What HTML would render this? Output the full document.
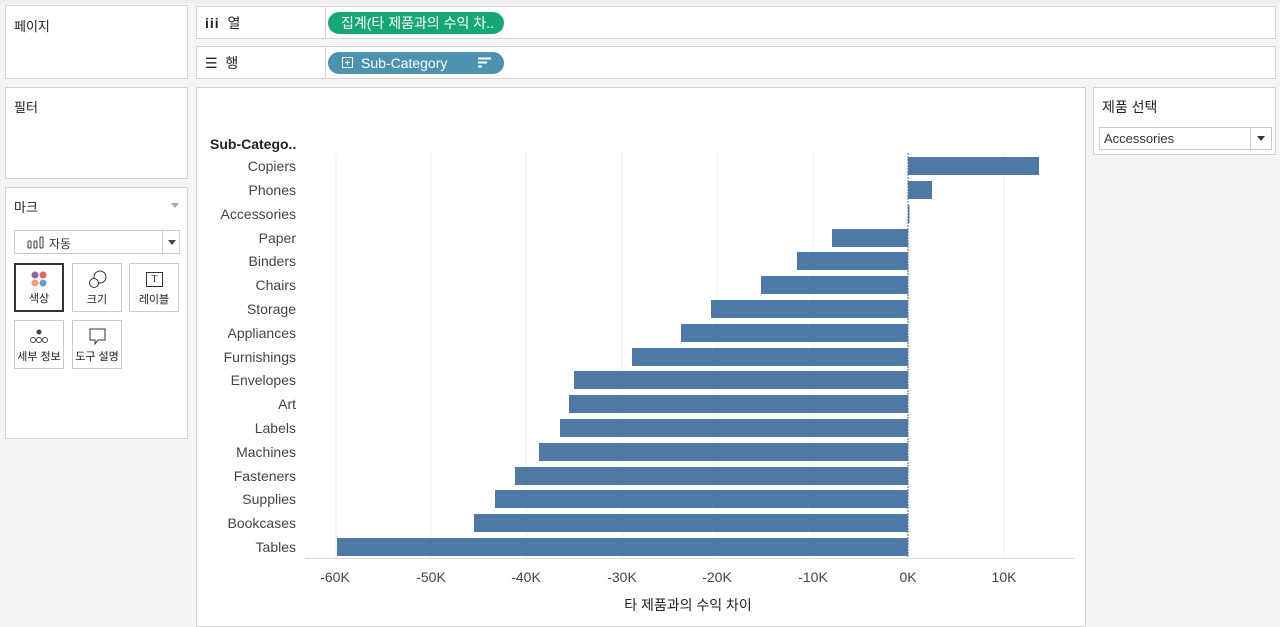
<!DOCTYPE html>
<html><head><meta charset="utf-8"><style>
body{margin:0;width:1280px;height:620px;background:#f5f5f5;font-family:"Liberation Sans","Noto Sans CJK KR",sans-serif;position:relative;overflow:hidden;color:#333}
.p{position:absolute;background:#fff;border:1px solid #d4d4d4;box-sizing:border-box}
.t{position:absolute;font-size:13px;color:#222}
.pill{position:absolute;height:22px;border-radius:11px;color:#fff;font-size:14px;line-height:22px}
.mb{position:absolute;width:50px;height:49px;background:#fff;border:1px solid #ccc;box-sizing:border-box;font-size:11px;text-align:center}
.mb span{position:absolute;top:30px;left:0;right:0;color:#222;line-height:13px}
.mb svg{position:absolute;left:0;top:0}
</style></head><body>
<div style="position:absolute;left:0;top:0;width:1280px;height:4px;background:#eee"></div>
<div class="p" style="left:5px;top:5px;width:183px;height:74px"><div class="t" style="left:8px;top:10px">페이지</div></div>
<div class="p" style="left:5px;top:87px;width:183px;height:92px"><div class="t" style="left:8px;top:9px">필터</div></div>
<div class="p" style="left:5px;top:187px;width:183px;height:252px">
 <div class="t" style="left:8px;top:9px">마크</div>
 <div style="position:absolute;left:165px;top:15px;border:4px solid transparent;border-top:5px solid #aaa"></div>
 <div style="position:absolute;left:8px;top:42px;width:166px;height:24px;border:1px solid #ccc;box-sizing:border-box;background:#fff">
  <svg width="20" height="14" style="position:absolute;left:12px;top:5px"><rect x="1" y="5" width="3" height="7" rx="1" fill="none" stroke="#333"/><rect x="7" y="5" width="3" height="7" rx="1" fill="none" stroke="#333"/><rect x="13" y="1" width="3" height="11" rx="1" fill="none" stroke="#333"/></svg>
  <span style="position:absolute;left:34px;top:4px;font-size:12px">자동</span>
  <div style="position:absolute;left:147px;top:0;width:1px;height:22px;background:#ccc"></div>
  <div style="position:absolute;left:153px;top:9px;border:4px solid transparent;border-top:5px solid #444"></div></div>
 <div class="mb" style="left:8px;top:75px;border:2px solid #333"><svg width="46" height="30"><circle cx="19" cy="10" r="3.5" fill="#8a6a9e"/><circle cx="27" cy="10" r="3.5" fill="#e8606a"/><circle cx="19" cy="18" r="3.5" fill="#f0a070"/><circle cx="27" cy="18" r="3.5" fill="#6a9ad0"/></svg><span style="top:28px">색상</span></div>
 <div class="mb" style="left:66px;top:75px"><svg width="48" height="30"><circle cx="27" cy="13" r="6" fill="none" stroke="#333"/><circle cx="21" cy="19" r="4.5" fill="#fff" stroke="#333"/></svg><span>크기</span></div>
 <div class="mb" style="left:123px;top:75px"><div style="position:absolute;left:16px;top:8px;width:15px;height:13px;border:1px solid #333;font-size:10px;line-height:13px;font-family:'Liberation Serif',serif">T</div><span>레이블</span></div>
 <div class="mb" style="left:8px;top:132px"><svg width="48" height="30"><circle cx="24" cy="11" r="2.5" fill="#444"/><circle cx="18" cy="19" r="2.5" fill="none" stroke="#444"/><circle cx="24" cy="19" r="2.5" fill="none" stroke="#444"/><circle cx="30" cy="19" r="2.5" fill="none" stroke="#444"/></svg><span>세부 정보</span></div>
 <div class="mb" style="left:66px;top:132px"><svg width="48" height="30"><path d="M17 8h15v11h-7l-3 4v-4h-5z" fill="none" stroke="#333"/></svg><span>도구 설명</span></div>
</div>
<div class="p" style="left:196px;top:6px;width:1080px;height:33px"><div style="position:absolute;left:128px;top:0;width:1px;height:31px;background:#d4d4d4"></div><div class="t" style="left:8px;top:6px;font-size:14px"><b style="letter-spacing:1px">iii</b>&nbsp; 열</div></div>
<div class="p" style="left:196px;top:46px;width:1080px;height:33px"><div style="position:absolute;left:128px;top:0;width:1px;height:31px;background:#d4d4d4"></div><div class="t" style="left:8px;top:6px;font-size:14px">☰&nbsp; 행</div></div>
<div class="pill" style="left:328px;top:12px;width:176px;background:#16a874;"><span style="margin-left:13px">집계(타 제품과의 수익 차..</span></div>
<div class="pill" style="left:328px;top:52px;width:176px;background:#4b93ae;">
 <svg width="12" height="12" style="position:absolute;left:14px;top:5px"><rect x="0.5" y="0.5" width="10" height="10" fill="none" stroke="#fff"/><path d="M5.5 3v5M3 5.5h5" stroke="#fff"/></svg>
 <span style="position:absolute;left:33px;top:0">Sub-Category</span>
 <svg width="14" height="12" style="position:absolute;left:150px;top:5px"><path d="M0 1.5h13M0 5.5h9M0 9.5h4" stroke="#fff" stroke-width="2"/></svg></div>
<div class="p" style="left:196px;top:87px;width:890px;height:540px"></div>
<div class="p" style="left:1093px;top:87px;width:183px;height:68px"><div class="t" style="left:8px;top:9px;font-size:14px">제품 선택</div>
 <div style="position:absolute;left:5px;top:39px;width:173px;height:23px;border:1px solid #ccc;box-sizing:border-box"><span style="position:absolute;left:4px;top:3px;font-size:13px">Accessories</span><div style="position:absolute;left:150px;top:0;width:1px;height:21px;background:#ccc"></div><div style="position:absolute;left:157px;top:8px;border:4px solid transparent;border-top:5px solid #333"></div></div></div>
<svg style="position:absolute;left:0;top:0" width="1280" height="620" font-family="Liberation Sans, sans-serif">
<g stroke="#ececec" stroke-width="1">
<line x1="336" y1="153" x2="336" y2="558"/><line x1="431" y1="153" x2="431" y2="558"/><line x1="526" y1="153" x2="526" y2="558"/><line x1="622" y1="153" x2="622" y2="558"/><line x1="717" y1="153" x2="717" y2="558"/><line x1="813" y1="153" x2="813" y2="558"/><line x1="1004" y1="153" x2="1004" y2="558"/>
</g>
<line x1="305" y1="558.5" x2="1075" y2="558.5" stroke="#ddd"/>
<line x1="908" y1="153" x2="908" y2="558" stroke="#666" stroke-dasharray="2,1"/>
<text x="210" y="149" font-size="14" font-weight="bold" fill="#222">Sub-Catego..</text>
<g font-size="14" fill="#444" text-anchor="end">
<text x="296" y="171">Copiers</text><text x="296" y="195">Phones</text><text x="296" y="219">Accessories</text><text x="296" y="243">Paper</text><text x="296" y="266">Binders</text><text x="296" y="290">Chairs</text><text x="296" y="314">Storage</text><text x="296" y="338">Appliances</text><text x="296" y="362">Furnishings</text><text x="296" y="385">Envelopes</text><text x="296" y="409">Art</text><text x="296" y="433">Labels</text><text x="296" y="457">Machines</text><text x="296" y="481">Fasteners</text><text x="296" y="504">Supplies</text><text x="296" y="528">Bookcases</text><text x="296" y="552">Tables</text>
</g>
<g fill="#4e78a5">
<rect x="908" y="157" width="131" height="18"/><rect x="908" y="181" width="24" height="18"/><rect x="908" y="205" width="1.5" height="18"/>
<rect x="832" y="229" width="76" height="18"/><rect x="797" y="252" width="111" height="18"/><rect x="761" y="276" width="147" height="18"/>
<rect x="711" y="300" width="197" height="18"/><rect x="681" y="324" width="227" height="18"/><rect x="632" y="348" width="276" height="18"/>
<rect x="574" y="371" width="334" height="18"/><rect x="569" y="395" width="339" height="18"/><rect x="560" y="419" width="348" height="18"/>
<rect x="539" y="443" width="369" height="18"/><rect x="515" y="467" width="393" height="18"/><rect x="495" y="490" width="413" height="18"/>
<rect x="474" y="514" width="434" height="18"/><rect x="337" y="538" width="571" height="18"/>
</g>
<g font-size="14" fill="#444" text-anchor="middle">
<text x="335" y="582">-60K</text><text x="431" y="582">-50K</text><text x="526" y="582">-40K</text><text x="622" y="582">-30K</text><text x="717" y="582">-20K</text><text x="813" y="582">-10K</text><text x="908" y="582">0K</text><text x="1004" y="582">10K</text>
<text x="688" y="610" font-family="Liberation Sans, Noto Sans CJK KR, sans-serif" fill="#222">타 제품과의 수익 차이</text>
</g>
</svg>
</body></html>
